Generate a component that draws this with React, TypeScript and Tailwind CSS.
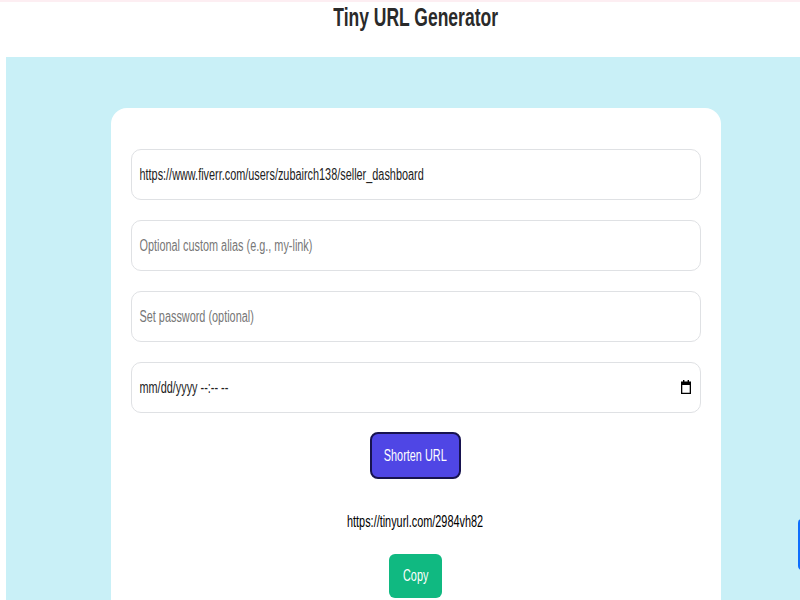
const box = "relative h-[51px] w-full overflow-hidden rounded-[10px] border border-[#dfe1e4] bg-white";
const field =
  "block h-full w-[147%] origin-left scale-x-[0.68] bg-transparent pl-[11px] text-[16px] text-[#222] placeholder:text-[#777] outline-none";

function Field(props: { value?: string; placeholder?: string; children?: React.ReactNode }) {
  return (
    <div className={box}>
      <input className={field} readOnly value={props.value} placeholder={props.placeholder} />
      {props.children}
    </div>
  );
}

export default function App() {
  return (
    <div className="relative h-[600px] w-[800px] overflow-hidden bg-white font-['Liberation_Sans',Arial,sans-serif]">
      <div className="h-[2px] bg-[#fdeef2]" />
      <div className="flex h-[598px] flex-col pl-[6px]">
        <header className="flex h-[55px] shrink-0 justify-center pl-[25px]">
          <h1 className="inline-block h-[30px] scale-x-[0.7] text-[25px] leading-[30px] font-bold text-[#2a2a2a]">
            Tiny URL Generator
          </h1>
        </header>
        <main className="flex-1 bg-[#c9f0f7] pt-[51px] pl-[105px] pr-[79px]">
          <div className="flex h-[600px] flex-col items-center rounded-t-[16px] bg-white px-5 pt-[41px]">
            <div className="flex w-full flex-col gap-5">
              <Field value="https://www.fiverr.com/users/zubairch138/seller_dashboard" />
              <Field placeholder="Optional custom alias (e.g., my-link)" />
              <Field placeholder="Set password (optional)" />
              <Field value="mm/dd/yyyy --:-- --">
                <svg viewBox="0 0 10 14" className="absolute top-[17px] right-[9px] h-[14px] w-[10px]">
                  <path d="M2 0h1.4v1.5h3.2V0H8v1.5h2V14H0V1.5h2z M1.3 5v7.7h7.4V5z" fill="#000" fillRule="evenodd" />
                </svg>
              </Field>
            </div>
            <button className="mt-[19px] mr-[1px] flex h-[47px] w-[91px] items-center justify-center rounded-[8px] border-2 border-[#17134f] bg-[#4f46e5] text-[16px] text-white">
              <span className="inline-block shrink-0 scale-x-[0.68] whitespace-nowrap">Shorten URL</span>
            </button>
            <p className="mt-[34px] mr-[1px] scale-x-[0.68] text-[16px] leading-[18px] whitespace-nowrap text-black">
              https://tinyurl.com/2984vh82
            </p>
            <button className="mt-[23px] mr-[1px] flex h-[44px] w-[53px] items-center justify-center rounded-[6px] bg-[#10b981] text-[16px] text-white">
              <span className="inline-block shrink-0 scale-x-[0.68]">Copy</span>
            </button>
          </div>
        </main>
      </div>
      <div className="absolute top-[519px] left-[798px] h-[51px] w-[6px] rounded-l-[4px] bg-[#0d6efd]" />
    </div>
  );
}
